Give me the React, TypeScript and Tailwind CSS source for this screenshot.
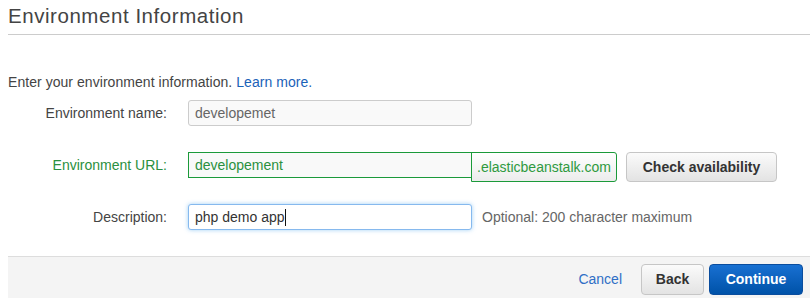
import React from "react";

export default function App() {
  return (
    <div
      className="w-[810px] h-[298px] bg-white overflow-hidden text-[14px] text-[#444]"
      style={{ fontFamily: "'Liberation Sans', Arial, sans-serif" }}
    >
      <div className="ml-[8px] h-[35px] border-b border-[#cccccc]">
        <h1 className="pt-[2px] text-[20.5px] leading-[28px] tracking-[0.55px] text-[#444] font-normal">
          Environment Information
        </h1>
      </div>

      <p className="mt-[37px] ml-[8px] leading-[20px] tracking-[0.05px] text-[#444]">
        Enter your environment information.{" "}
        <a className="text-[#1a62b8]" href="#">
          Learn more.
        </a>
      </p>

      <div className="mt-[8px]">
        <div className="flex h-[52px] items-start gap-[21px]">
          <div className="w-[167px] text-right leading-[26px] text-[#444]">Environment name:</div>
          <div className="w-[284px] h-[26px] rounded-[3px] border border-[#cccccc] bg-[#f9f9f9] pl-[6px] leading-[24px] text-[#666]">
            developemet
          </div>
        </div>

        <div className="flex h-[52px] items-start gap-[21px]">
          <div className="w-[167px] text-right leading-[26px] text-[#2a9040]">Environment URL:</div>
          <div className="flex items-start">
            <div className="w-[284px] h-[26px] border border-[#1b9a3a] bg-[#f9f9f9] pl-[6px] leading-[24px] text-[#2a9040]">
              developement
            </div>
            <div className="-ml-px w-[146px] h-[30px] rounded-r-[3px] border border-[#1b9a3a] bg-gradient-to-b from-white to-[#ececec] pl-[5px] leading-[28px] text-[#2f9a3f]">
              .elasticbeanstalk.com
            </div>
            <button className="ml-[9px] w-[151px] h-[30px] rounded-[4px] border border-[#c6c6c6] bg-gradient-to-b from-[#fbfbfb] to-[#e3e3e3] font-bold text-[14px] leading-[28px] text-[#333]">
              Check availability
            </button>
          </div>
        </div>

        <div className="flex h-[52px] items-start gap-[21px]">
          <div className="w-[167px] text-right leading-[26px] text-[#444]">Description:</div>
          <div className="flex items-start">
            <div className="w-[284px] h-[26px] rounded-[3px] border border-[#86b9ee] bg-white pl-[6px] leading-[24px] text-[#333] shadow-[0_0_4px_rgba(82,168,236,0.55)] flex items-center">
              <span>php demo app</span>
              <span className="inline-block w-px h-[17px] bg-[#111]" />
            </div>
            <div className="ml-[10px] leading-[26px] text-[#666]">Optional: 200 character maximum</div>
          </div>
        </div>
      </div>

      <div className="ml-[8px] h-[42px] border-t border-[#dddddd] bg-[#f4f4f4] flex items-start justify-end pr-[7px] pt-[7px]">
        <a href="#" className="mr-[19px] leading-[31px] text-[#2f6fc6]">
          Cancel
        </a>
        <button className="w-[63px] h-[31px] rounded-[4px] border border-[#c6c6c6] bg-gradient-to-b from-[#fbfbfb] to-[#e3e3e3] font-bold text-[14px] leading-[29px] text-[#333]">
          Back
        </button>
        <button className="ml-[5px] w-[94px] h-[31px] rounded-[4px] border border-[#0a4d9e] bg-gradient-to-b from-[#1870d2] to-[#0052a8] font-bold text-[14px] leading-[29px] text-white">
          Continue
        </button>
      </div>
    </div>
  );
}
